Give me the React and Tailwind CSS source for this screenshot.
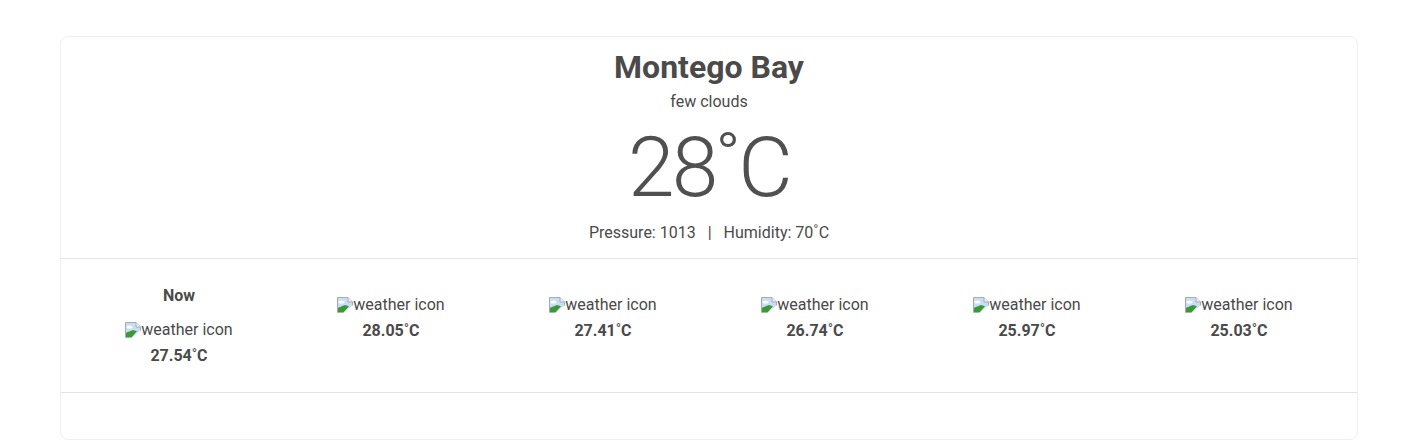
const forecast = [
  { label: 'Now', temp: '27.54' },
  { temp: '28.05' },
  { temp: '27.41' },
  { temp: '26.74' },
  { temp: '25.97' },
  { temp: '25.03' },
];

const BrokenImage = () => (
  <svg width="16" height="16" viewBox="0 0 16 16" className="inline-block mb-[2px] shrink-0">
    <path d="M0.5 0.5H11L15.5 5V8.5L6.5 15.5H0.5Z" fill="#c9ddf5" />
    <ellipse cx="4.5" cy="5" rx="3" ry="1.6" fill="#ffffff" />
    <path d="M0.5 15.5V11L8 8L12 9.2L6.5 15.5Z" fill="#3c9a36" />
    <path d="M0.5 15.5V0.5H11L15.5 5V8.5" fill="none" stroke="#a5acb4" />
    <path d="M11 0.5V5H15.5" fill="#eef1f4" stroke="#a5acb4" />
  </svg>
);

const WeatherIcon = () => (
  <span className="inline-flex items-end text-[16px] leading-5 font-normal text-[#4a4a4a]">
    <BrokenImage />
    weather icon
  </span>
);

export default function App() {
  return (
    <div className="min-h-[440px] bg-white pt-9 px-[60px] font-['Roboto',sans-serif] text-[#4a4a4a]">
      <div className="rounded-lg border border-[#f0f0f0] bg-white pb-[46px]">
        <div className="flex flex-col items-center pt-[10px] pb-[15px]">
          <h1 className="text-[32px] leading-[40px] font-bold">Montego Bay</h1>
          <p className="mt-[5px] text-[16px] leading-5">few clouds</p>
          <div className="mt-[4px] text-[84px] leading-[104px] font-light tracking-[-3px] text-[#505050]">
            28˚C
          </div>
          <p className="mt-[3px] text-[16px] leading-5">
            Pressure: 1013<span className="px-[12px]">|</span>Humidity: 70˚C
          </p>
        </div>
        <div className="border-t border-[#e3e3e3]" />
        <div className="grid grid-cols-6 px-3 pt-[27px] pb-[26px]">
          {forecast.map((f, i) => (
            <div key={i} className="flex flex-col items-center">
              {f.label ? (
                <div className="text-[16px] leading-5 font-bold mb-[14px]">{f.label}</div>
              ) : (
                <div className="h-[9px]" />
              )}
              <WeatherIcon />
              <div className="mt-[6px] text-[16px] leading-5 font-bold">{f.temp}˚C</div>
            </div>
          ))}
        </div>
        <div className="border-t border-[#e3e3e3]" />
      </div>
    </div>
  );
}
